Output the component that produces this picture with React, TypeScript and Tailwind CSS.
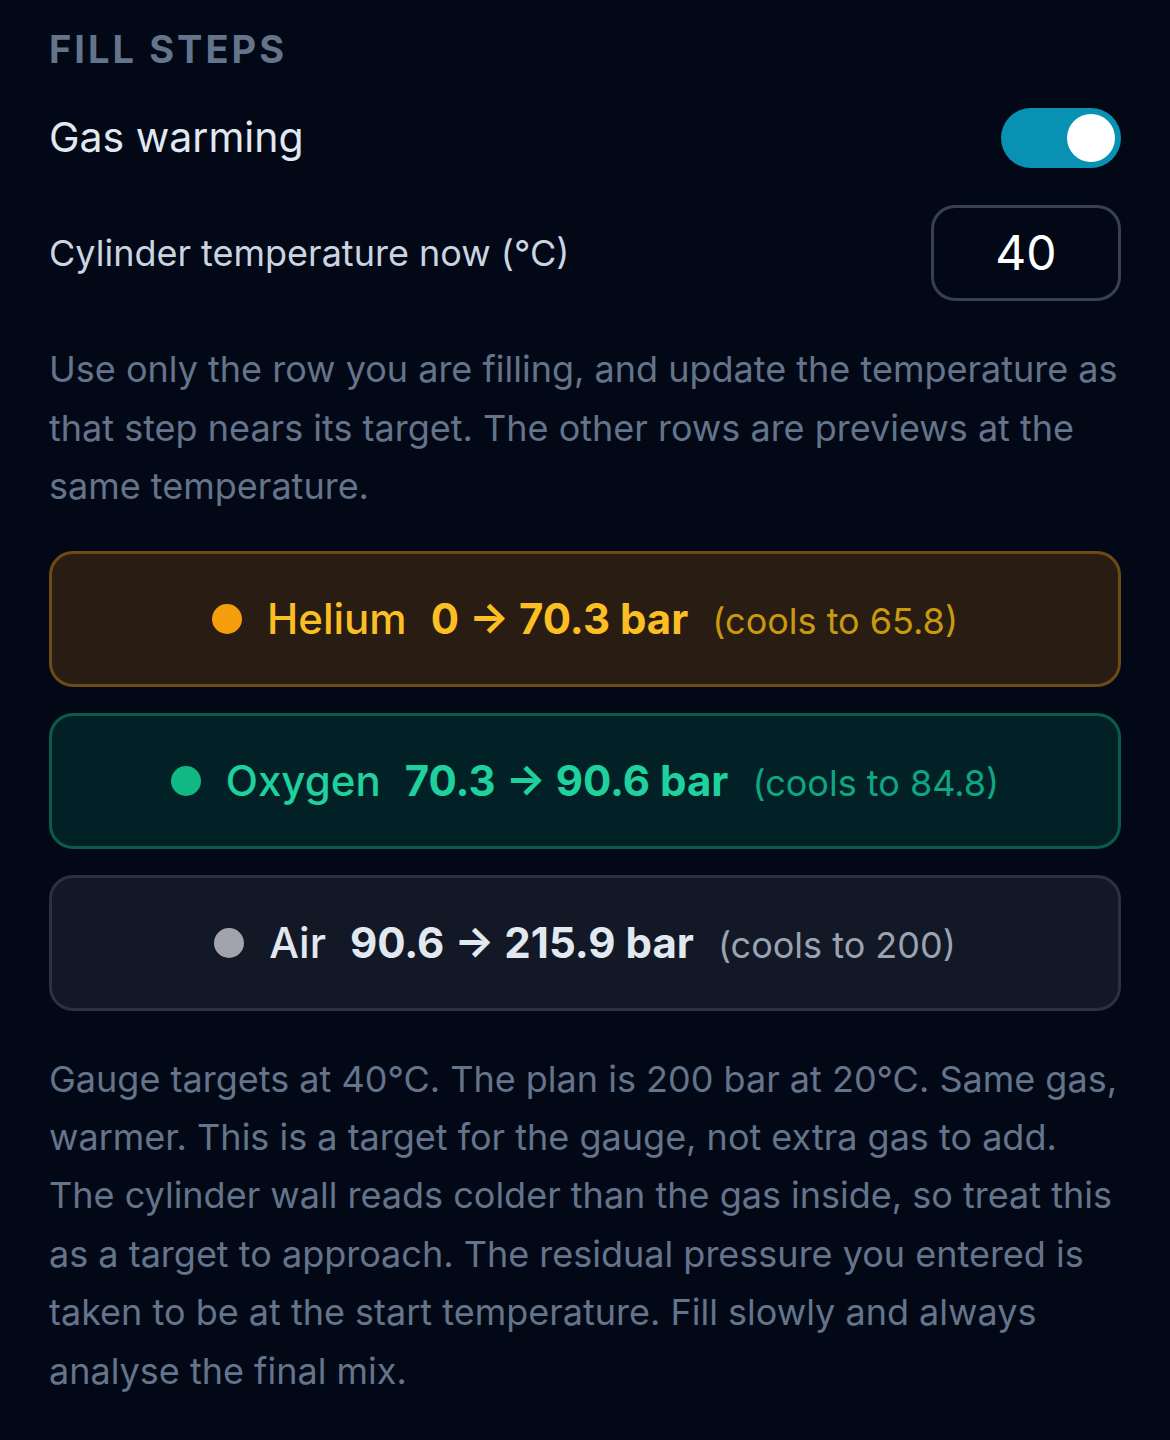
import React from "react";

type Step = {
  name: string;
  from: string;
  to: string;
  cools: string;
  card: string;
  dot: string;
  main: string;
  sub: string;
};

const steps: Step[] = [
  {
    name: "Helium",
    from: "0",
    to: "70.3",
    cools: "65.8",
    card: "bg-[#291d13] border-[#6e4a14]",
    dot: "bg-[#f59e0b]",
    main: "text-[#fbbf24]",
    sub: "text-[#c99a0e]",
  },
  {
    name: "Oxygen",
    from: "70.3",
    to: "90.6",
    cools: "84.8",
    card: "bg-[#022127] border-[#0c5a4c]",
    dot: "bg-[#10b981]",
    main: "text-[#1fd19c]",
    sub: "text-[#0fa682]",
  },
  {
    name: "Air",
    from: "90.6",
    to: "215.9",
    cools: "200",
    card: "bg-[#131826] border-[#2b3140]",
    dot: "bg-[#a3a3ad]",
    main: "text-[#e2e8f0]",
    sub: "text-[#9aa3b2]",
  },
];

export default function App() {
  return (
    <div
      className="min-h-[1440px] w-full bg-[#030817] px-[49px] pt-[20px] pb-[40px]"
      style={{ fontFamily: "Inter, 'Noto Sans', sans-serif" }}
    >
      <h2 className="text-[38px] leading-[58px] font-bold tracking-[0.08em] text-[#64748b]">
        FILL STEPS
      </h2>

      <div className="mt-[30px] flex h-[60px] items-center justify-between">
        <span className="text-[41px] text-[#e2e8f0]">Gas warming</span>
        <div className="flex h-[60px] w-[120px] items-center justify-end rounded-full bg-[#0891b2] pr-[6px]">
          <div className="h-[48px] w-[48px] rounded-full bg-white" />
        </div>
      </div>

      <div className="mt-[37px] flex items-center justify-between">
        <span className="text-[36px] text-[#cbd5e1]">Cylinder temperature now (°C)</span>
        <div className="flex h-[96px] w-[190px] items-center justify-center rounded-[24px] border-[3px] border-[#374151] text-[48px] text-white">
          40
        </div>
      </div>

      <p className="mt-[39px] text-[36px] leading-[58.5px] text-[#64748b]">
        Use only the row you are filling, and update the temperature as that step nears its
        target. The other rows are previews at the same temperature.
      </p>

      <div className="mt-[35px] flex flex-col gap-[26px]">
        {steps.map((s) => (
          <div
            key={s.name}
            className={`flex h-[136px] items-center justify-center gap-[25px] rounded-[24px] border-[3px] ${s.card}`}
          >
            <span className={`h-[30px] w-[30px] rounded-full ${s.dot}`} />
            <span className={`flex items-baseline gap-[24px] ${s.main}`}>
              <span className="text-[42px] font-medium">{s.name}</span>
              <span className="text-[42px] font-bold">
                {s.from} → {s.to} bar
              </span>
              <span className={`text-[36px] font-normal ${s.sub}`}>(cools to {s.cools})</span>
            </span>
          </div>
        ))}
      </div>

      <p className="mt-[39px] text-[36px] leading-[58.4px] text-[#64748b]">
        Gauge targets at 40°C. The plan is 200 bar at 20°C. Same gas, warmer. This is a target for
        the gauge, not extra gas to add. The cylinder wall reads colder than the gas inside, so
        treat this as a target to approach. The residual pressure you entered is taken to be at the
        start temperature. Fill slowly and always analyse the final mix.
      </p>
    </div>
  );
}
